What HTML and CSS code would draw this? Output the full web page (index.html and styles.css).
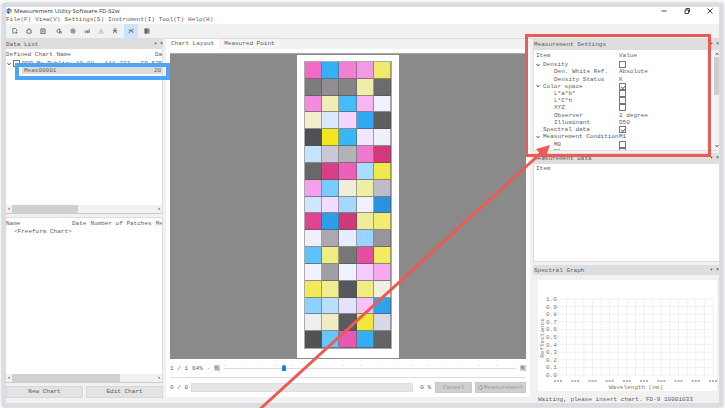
FILE: index.html
```
<!DOCTYPE html>
<html lang="en">
<head>
    <meta charset="UTF-8">
    <meta name="viewport" content="width=device-width, initial-scale=1.0">
    <title>Measurement Utility Software FD-S2w</title>
    <link rel="stylesheet" href="styles.css">
</head>
<body>
    <div class="window">
        <header class="titlebar">
            <svg class="logo" viewBox="0 0 12 12"><path fill="#2f6fc0" d="M1 3l5-3v6z"/><path fill="#35b3a0" d="M6 0l5 3-5 3z"/><path fill="#e2574c" d="M11 3v6L6 6z"/><path fill="#f0b840" d="M11 9l-5 3V6z"/><path fill="#1e4f9c" d="M6 12L1 9l5-3z"/><path fill="#3fa0e8" d="M1 9V3l5 3z"/></svg>
            <h1>Measurement Utility Software FD-S2w</h1>
            <div class="window-controls">
                <button aria-label="Minimize"><svg viewBox="0 0 12 12"><path d="M1 6h10"/></svg></button>
                <button aria-label="Restore"><svg viewBox="0 0 12 12"><path d="M2 4h7v7H2zM4 4V1h7v7H9"/></svg></button>
                <button aria-label="Close"><svg viewBox="0 0 12 12"><path d="M1 1l10 10M11 1L1 11"/></svg></button>
            </div>
        </header>

        <nav class="menu">
            <button>File(F)</button>
            <button>View(V)</button>
            <button>Settings(S)</button>
            <button>Instrument(I)</button>
            <button>Tool(T)</button>
            <button>Help(H)</button>
        </nav>

        <div class="toolbar">
            <div class="tool-group">
                <button aria-label="New"><svg viewBox="0 0 14 14"><path d="M6 12H2V1h6l3 3v3M10 8v5M7 11h6"/></svg></button>
                <button aria-label="Open"><svg viewBox="0 0 14 14"><path d="M2 12V5h3V2h4v3h3v7z"/></svg></button>
                <button aria-label="Save"><svg viewBox="0 0 14 14"><path d="M2 2h10v11H2zM4 5h6M4 9h6"/></svg></button>
            </div>
            <div class="tool-group">
                <button aria-label="Connect"><svg viewBox="0 0 14 14"><path d="M9 4a4 4 0 1 0-3 7M7 2l3 2-3 2M8 8h4v4H8z"/></svg></button>
                <button aria-label="Settings"><svg viewBox="0 0 14 14"><circle cx="7" cy="7" r="5" stroke-width="2"/><circle cx="7" cy="7" r="2"/></svg></button>
                <button aria-label="Calibrate"><svg viewBox="0 0 14 14"><path d="M1 9h3v3M5 9V5M8 12V6M12 12V2M8 9h4"/></svg></button>
                <button aria-label="Register" disabled><svg viewBox="0 0 14 14"><path d="M7 2L4 8h6zM2 9v3h10V9"/></svg></button>
                <button aria-label="Light source"><svg viewBox="0 0 14 14"><path d="M4 2h6M2 6h10M7 3v7M3 12l3-5M11 12L8 7"/></svg></button>
            </div>
            <div class="tool-group">
                <button class="active" aria-label="Spectral graph"><svg viewBox="0 0 14 14"><path d="M1 12c4 0 3-8 6-8s1 7 6 6M2 5h3l6 5M9 5l4-3"/></svg></button>
            </div>
            <div class="tool-group">
                <button aria-label="Patches"><svg viewBox="0 0 14 14"><path fill="#888" stroke="none" d="M1 1h12v12H1z"/><path stroke="#555" d="M3 1v12M6 1v12"/></svg></button>
            </div>
        </div>

        <main class="workspace">
            <section class="left-column">
                <div class="dock-title"><h2>Data List</h2><span class="pins">▾ ×</span></div>
                <div class="list defined-list">
                    <div class="list-row list-head"><span>Defined Chart Name</span><span class="date">Da</span></div>
                    <div class="list-row group-row">
                        <svg class="chevron" viewBox="0 0 8 8"><path d="M1 2l3 4 3-4"/></svg>
                        <input type="checkbox" id="group1"><label for="group1">DDP_My Public: 10.08...111.227...FD-S2S</label>
                    </div>
                    <div class="list-row selected"><span>Meas00001</span><span class="date">20</span></div>
                    <div class="list-space"></div>
                    <div class="scrollbar"><span class="arrow">‹</span><span class="track"><span class="thumb short"></span></span><span class="arrow">›</span></div>
                </div>
                <div class="list freeform-list">
                    <div class="list-row free-head"><span class="free-name">Name</span><span>Date</span><span>Number of Patches</span><span>Mea</span></div>
                    <div class="list-row free-row">&lt;Freeform Chart&gt;</div>
                    <div class="list-space"></div>
                    <div class="scrollbar"><span class="arrow">‹</span><span class="track"><span class="thumb long"></span></span><span class="arrow">›</span></div>
                </div>
                <div class="chart-buttons">
                    <button>New Chart</button>
                    <button>Edit Chart</button>
                </div>
            </section>

            <section class="center-column">
                <div class="tabs">
                    <button class="tab current">Chart Layout</button>
                    <button class="tab">Measured Point</button>
                </div>
                <div class="viewer">
                    <div class="canvas">
                        <div class="sheet"><div class="patches" id="patches"></div></div>
                    </div>
                    <div class="zoom-row">
                        <span>1 / 1</span>
                        <label for="zoom">64% ·</label>
                        <svg class="magnifier" viewBox="0 0 12 12"><rect width="12" height="12" fill="#d2d2d2" stroke="none"/><circle cx="5" cy="5" r="3"/><path d="M7 7l4 4M3 5h4"/></svg>
                        <div class="slider">
                            <input type="range" id="zoom" min="0" max="100" value="20">
                        </div>
                        <svg class="magnifier" viewBox="0 0 12 12"><rect width="12" height="12" fill="#d2d2d2" stroke="none"/><circle cx="5" cy="5" r="3"/><path d="M7 7l4 4M3 5h4M5 3v4"/></svg>
                    </div>
                    <div class="progress-row">
                        <span>0 / 0</span>
                        <div class="progress"></div>
                        <span class="percent">0 %</span>
                        <button class="cancel" disabled>Cancel</button>
                        <button class="measure" disabled><svg viewBox="0 0 12 12"><path d="M9 2a5 5 0 1 0 2 4M8 1v3h3"/></svg>Measurement</button>
                    </div>
                </div>
            </section>

            <section class="right-column">
                <div class="dock-title"><h2>Measurement Settings</h2><span class="pins">▾ ×</span></div>
                <div class="settings">
                    <div class="settings-view">
                        <table>
                            <thead><tr><th>Item</th><th>Value</th></tr></thead>
                            <tbody>
                                <tr class="parent"><td><svg class="chevron" viewBox="0 0 8 8"><path d="M1 2l3 4 3-4"/></svg><label for="density">Density</label></td><td><input type="checkbox" id="density"></td></tr>
                                <tr class="child"><td>Den. White Ref.</td><td>Absolute</td></tr>
                                <tr class="child"><td>Density Status</td><td>K</td></tr>
                                <tr class="parent"><td><svg class="chevron" viewBox="0 0 8 8"><path d="M1 2l3 4 3-4"/></svg><label for="color">Color space</label></td><td><input type="checkbox" id="color" checked></td></tr>
                                <tr class="child"><td><label for="lab">L*a*b*</label></td><td><input type="checkbox" id="lab"></td></tr>
                                <tr class="child"><td><label for="lch">L*C*h</label></td><td><input type="checkbox" id="lch"></td></tr>
                                <tr class="child"><td><label for="xyz">XYZ</label></td><td><input type="checkbox" id="xyz"></td></tr>
                                <tr class="child"><td>Observer</td><td>2 degree</td></tr>
                                <tr class="child"><td>Illuminant</td><td>D50</td></tr>
                                <tr class="parent"><td><span class="chevron"></span><label for="spectral">Spectral data</label></td><td><input type="checkbox" id="spectral" checked></td></tr>
                                <tr class="parent"><td><svg class="chevron" viewBox="0 0 8 8"><path d="M1 2l3 4 3-4"/></svg>Measurement Condition</td><td>M1</td></tr>
                                <tr class="child"><td><label for="m0">M0</label></td><td><input type="checkbox" id="m0"></td></tr>
                                <tr class="child"><td><label for="m1">M1</label></td><td><input type="checkbox" id="m1" checked></td></tr>
                            </tbody>
                        </table>
                    </div>
                    <div class="vscroll">
                        <svg viewBox="0 0 8 8"><path d="M1 6l3-4 3 4"/></svg>
                        <span class="vthumb"></span>
                        <svg class="down" viewBox="0 0 8 8"><path d="M1 2l3 4 3-4"/></svg>
                    </div>
                </div>

                <div class="dock-title"><h2>Measurement Data</h2><span class="pins">▾ ×</span></div>
                <div class="measure-data">Item</div>

                <div class="dock-title"><h2>Spectral Graph</h2><span class="pins">▾ ×</span></div>
                <div class="graph">
                    <svg id="graph" viewBox="0 0 179 111">
                        <text class="axis-title" x="98" y="109">Wavelength (nm)</text>
                        <text class="axis-title" transform="translate(6 58) rotate(-90)">Reflectance</text>
                    </svg>
                </div>
                <p class="status">Waiting, please insert chart. FD-9 10001033</p>
            </section>
        </main>
    </div>

    <div class="callout blue"></div>
    <div class="callout red"></div>
    <svg class="pointer" viewBox="0 0 725 408"><path d="M260 409L541 153" stroke="#ec5a54" stroke-width="3"/><path d="M550 145l-5 14-9-10z" fill="#ec5a54"/></svg>

    <script>
        const rows = [
            'f06cc4 33b1f4 f180d2 f29ae4 f0e96c',
            '7c7c7c 918e92 868386 eeedaa 6c6c6c',
            'f48bdc efeeb5 45bcfa f6b6f0 f1f0ff',
            'f1efce dbe9ff f3d4ff 2ea8ee 5f5f5f',
            '505056 f2e71c 37b6f8 f3e4ff eef0fc',
            'c2e4ff cac8d4 b3b2b8 f078ce d2387a',
            '686868 d93e88 ec60b8 aadcff f0e94c',
            'f4a0ea 79ccff f0eeda f0eea2 bebcc8',
            'd0e6ff f2dcff a4d8ff f1f0ff 2b92e0',
            'de4493 2d9ee8 d03878 efee98 f2ec74',
            'f0effe aba8b0 e6edff 98d4ff 98969a',
            '5cc2fc f0ec84 797678 e44f9e f1eb62',
            'f1f0ff a09fa4 f1f0ff f3ccfb f6a9ef',
            'f2e958 f0ed90 58585c f1ec80 eff0e0',
            '8dd2ff badffc e4e2f6 f4c2f8 30a3ec',
            'eeeeef f0edc2 5b5a5f f2e83c d8d8e6',
            '505254 69c5ff e958b0 31aef4 646464'
        ];
        document.getElementById('patches').innerHTML = rows.join(' ').split(' ')
            .map(c => `<span style="background:#${c}"></span>`).join('');

        // reflectance grid: 18 columns, 10 rows
        let out = '';
        for (let i = 0; i <= 18; i++) {
            const x = 20 + i * 155 / 18;
            out += `<path class="grid" d="M${x} 19V96"/>`;
            if (i % 2 === 0) out += `<path class="tick" d="M${x - 4} 101h8"/>`;
        }
        for (let i = 0; i <= 10; i++) {
            const y = 19 + i * 76 / 10;
            out += `<path class="grid" d="M19 ${y}H175"/>`;
            out += `<text x="8" y="${y + 2}">${(1 - i / 10).toFixed(1)}</text>`;
        }
        document.getElementById('graph').innerHTML += out;
    </script>
</body>
</html>
```

FILE: styles.css
```
* {
    margin: 0;
    padding: 0;
    box-sizing: border-box;
}

body {
    height: 100vh;
    padding: 3px 2px 1px;
    background: #f7f7f8;
    font: 6px/7px "Liberation Mono", monospace;
    color: #5c5c5c;
    overflow: hidden;
}

button {
    font: inherit;
    color: inherit;
    background: none;
    border: none;
}

h1,
h2 {
    font-size: 6px;
    font-weight: normal;
}

svg {
    display: block;
    fill: none;
    stroke: #666;
}

.window {
    height: 100%;
    display: flex;
    flex-direction: column;
    background: #f1f1f1;
    border: 4px solid #dcdde2;
    border-radius: 4px;
    box-shadow: 0 0 2px #aaa;
    overflow: hidden;
}

/* title and menu */
.titlebar {
    display: flex;
    align-items: center;
    height: 8px;
    background: #fff;
}

.titlebar h1 {
    font-family: "Open Sans", sans-serif;
    line-height: 6px;
    color: #333;
}

.logo {
    width: 6px;
    height: 6px;
    margin-right: 2px;
    stroke: none;
}

.window-controls {
    display: flex;
    gap: 17px;
    margin-left: auto;
    padding-right: 6px;
}

.window-controls svg {
    width: 6px;
    height: 6px;
    stroke: #444;
    stroke-width: 2;
}

.menu {
    display: flex;
    gap: 4px;
    height: 9px;
    background: #fff;
}

/* toolbar */
.toolbar {
    display: flex;
    align-items: center;
    gap: 2px;
    height: 14px;
    padding-left: 2px;
}

.tool-group {
    display: flex;
}

.tool-group button {
    width: 14px;
    height: 14px;
    display: grid;
    place-items: center;
}

.tool-group svg {
    width: 6px;
    height: 6px;
    stroke-width: 2;
}

.tool-group button:disabled {
    opacity: 0.4;
}

.tool-group .active {
    background: #cce4f9;
}

/* columns */
.workspace {
    flex: 1;
    min-height: 0;
    display: flex;
    border-top: 1px solid #ddd;
}

.left-column,
.center-column,
.right-column {
    display: flex;
    flex-direction: column;
    min-width: 0;
}

.left-column {
    width: 157px;
    padding-bottom: 5px;
}

.center-column {
    flex: 1;
    margin: 0 3px;
    padding-bottom: 6px;
}

.right-column {
    width: 186px;
}

.dock-title {
    display: flex;
    justify-content: space-between;
    align-items: center;
    flex: none;
    height: 10px;
    padding-left: 1px;
    background: #dedede;
    white-space: nowrap;
    overflow: hidden;
}

.pins {
    font-size: 5px;
    color: #333;
}

/* chart lists */
.left-column .dock-title {
    padding-left: 0;
}

.list {
    display: flex;
    flex-direction: column;
    min-height: 0;
    background: #fff;
    border-right: 1px solid #ddd;
    border-bottom: 1px solid #ccc;
    overflow: hidden;
    white-space: nowrap;
}

.defined-list {
    flex: 1;
    margin-bottom: 3px;
}

.freeform-list {
    flex: 1;
    border-top: 1px solid #ddd;
}

.list-row {
    display: flex;
    align-items: center;
    flex: none;
    height: 7px;
}

.list-head {
    height: 11px;
}

.date {
    width: 8px;
    margin-left: auto;
}

.list-head .date {
    width: 7px;
    overflow: hidden;
}

.group-row {
    gap: 2px;
    padding-left: 1px;
    overflow: hidden;
}

.chevron {
    flex: none;
    width: 4px;
    height: 4px;
    stroke-width: 2;
}

.selected {
    margin-left: 16px;
    padding-left: 2px;
    background: #dcdcdc;
}

.list-space {
    flex: 1;
}

.scrollbar {
    display: flex;
    height: 8px;
    background: #f1f1f1;
}

.arrow {
    width: 6px;
    text-align: center;
    color: #222;
}

.track {
    flex: 1;
    display: flex;
}

.thumb {
    background: #d0d0d0;
}

.short {
    width: 46%;
}

.long {
    width: 75%;
}

.free-head {
    gap: 4px;
    height: 10px;
}

.free-name {
    flex: none;
    width: 62px;
}

.free-row {
    padding-left: 8px;
}

.chart-buttons {
    display: flex;
    gap: 3px;
    margin-top: 3px;
}

.chart-buttons button {
    flex: 1;
    height: 12px;
    background: #e3e3e3;
    border: 1px solid #d8d8d8;
    line-height: 10px;
}

/* chart view */
.tabs {
    display: flex;
    height: 10px;
}

.tab {
    padding: 0 5px 1px;
    background: #f5f5f5;
}

.tab.current {
    background: #fff;
}

.viewer {
    flex: 1;
    min-height: 0;
    display: flex;
    flex-direction: column;
    padding: 4px 4px 0;
    background: #fff;
}

.canvas {
    flex: 1;
    min-height: 0;
    display: flex;
    justify-content: center;
    padding: 1px 0;
    background: #8a8a8a;
    border-top: 1px solid #aaa;
}

.sheet {
    width: 102px;
    padding: 6px 7px 9px;
    background: #fff;
}

.patches {
    height: 100%;
    display: grid;
    grid-template-columns: repeat(5, 1fr);
    grid-auto-rows: 1fr;
    border: 1px solid #aaa;
}

.patches span {
    border-right: 1px solid rgba(80, 80, 80, 0.5);
    border-bottom: 1px solid rgba(80, 80, 80, 0.6);
}

.zoom-row {
    display: flex;
    align-items: center;
    gap: 4px;
    height: 19px;
    border-bottom: 1px solid #ddd;
}

.magnifier {
    width: 6px;
    height: 6px;
    stroke-width: 1;
}

.slider {
    flex: 1;
    display: flex;
    height: 6px;
    background: repeating-linear-gradient(90deg, #ddd 0 1px, transparent 1px 17px) top / 100% 1px no-repeat;
}

input[type="range"] {
    appearance: none;
    width: 100%;
    height: 6px;
    background: linear-gradient(#ddd, #ddd) center / 100% 1px no-repeat;
}

input[type="range"]::-webkit-slider-thumb {
    appearance: none;
    width: 4px;
    height: 6px;
    background: #1b7fd6;
    border-radius: 2px 2px 0 0;
}

.progress-row {
    display: flex;
    align-items: center;
    gap: 3px;
    height: 19px;
}

.progress {
    flex: 1;
    height: 9px;
    background: #e6e6e6;
    border: 1px solid #ddd;
}

.percent {
    padding: 0 1px 0 4px;
}

.cancel,
.measure {
    height: 11px;
    background: #d0d0d0;
    border: 1px solid #c8c8c8;
    color: #999;
    line-height: 9px;
}

.cancel {
    width: 37px;
}

.measure {
    display: flex;
    align-items: center;
    justify-content: center;
    gap: 1px;
    width: 51px;
}

.measure svg {
    width: 5px;
    height: 5px;
    stroke: #999;
    stroke-width: 2;
}

/* settings */
.settings {
    display: flex;
    height: 102px;
    margin-bottom: 2px;
    background: #fff;
    border: 1px solid #ddd;
    border-right: none;
}

.settings-view {
    flex: 1;
    overflow: hidden;
}

table,
thead {
    display: block;
}

tbody {
    display: grid;
    grid-auto-rows: 1fr;
    height: 94px;
}

tr {
    display: grid;
    grid-template-columns: 83px 1fr;
    align-items: center;
    min-height: 0;
    padding-left: 2px;
}

thead tr {
    height: 11px;
}

th {
    font-weight: normal;
    text-align: left;
}

td {
    display: flex;
    align-items: center;
    height: 7px;
    white-space: nowrap;
}

.parent td {
    gap: 3px;
}

.child td:first-child {
    padding-left: 18px;
}

input[type="checkbox"] {
    appearance: none;
    flex: none;
    width: 7px;
    height: 7px;
    background: #fff;
    border: 1px solid #777;
}

input[type="checkbox"]:checked::before {
    content: "";
    display: block;
    width: 4px;
    height: 2px;
    margin: 1px 0 0 1px;
    border-left: 1px solid #777;
    border-bottom: 1px solid #777;
    transform: rotate(-45deg);
}

.vscroll {
    display: flex;
    flex-direction: column;
    align-items: center;
    width: 5px;
    padding: 2px 0;
    background: #f1f1f1;
}

.vscroll svg {
    width: 4px;
    height: 4px;
    stroke-width: 2;
}

.vthumb {
    width: 5px;
    height: 38px;
    margin-top: 1px;
    background: #cdcdcd;
}

.vscroll .down {
    margin-top: auto;
}

.measure-data {
    height: 101px;
    margin-bottom: 3px;
    padding: 1px 2px;
    background: #fff;
    border: 1px solid #ddd;
    border-right: none;
}

/* graph */
.graph {
    margin: 5px 2px 5px 5px;
    background: #fff;
}

.graph svg {
    width: 100%;
}

.graph text {
    fill: #777;
    stroke: none;
}

.graph .axis-title {
    text-anchor: middle;
}

.grid {
    stroke: #f0f0f0;
}

.tick {
    stroke: #666;
    stroke-dasharray: 2 1;
}

.status {
    padding-left: 5px;
    white-space: nowrap;
}

/* annotations over the window */
.callout {
    position: absolute;
}

.blue {
    left: 15px;
    top: 63px;
    width: 155px;
    height: 17px;
    border: 4px solid #4da5f5;
}

.red {
    left: 525px;
    top: 34px;
    width: 186px;
    height: 123px;
    border: 3px solid #ec5a54;
}

.pointer {
    position: absolute;
    left: 0;
    top: 0;
    width: 725px;
    height: 408px;
    stroke: none;
    pointer-events: none;
}
```
